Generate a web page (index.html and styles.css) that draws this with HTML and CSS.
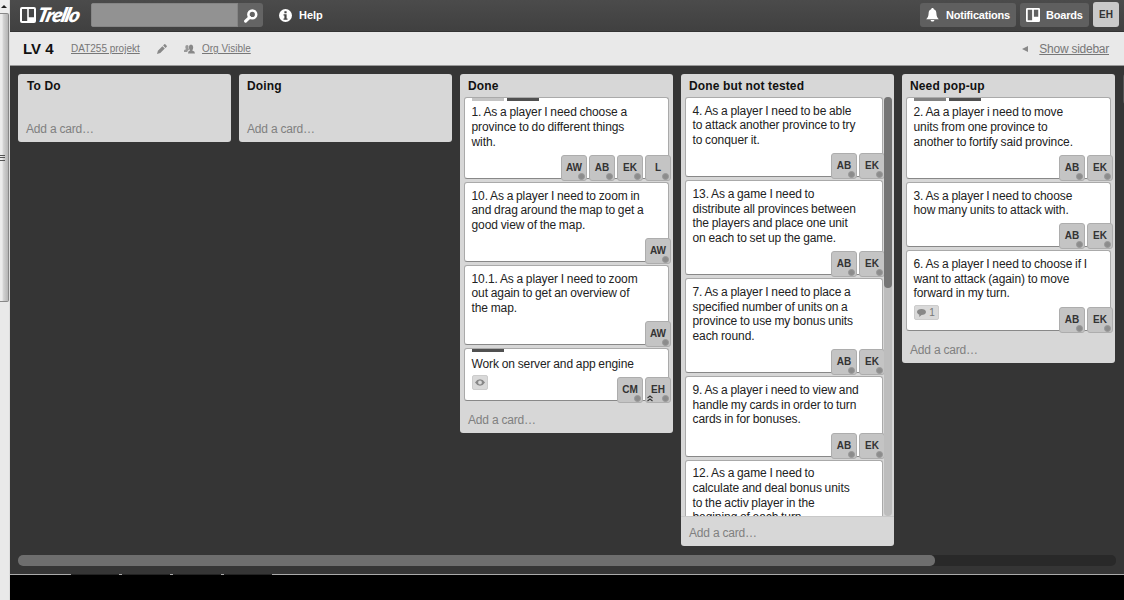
FILE: index.html
```html
<!DOCTYPE html>
<html lang="en">
<head>
<meta charset="utf-8">
<title>LV 4 | Trello</title>
<link rel="stylesheet" href="styles.css">
</head>
<body>
<div class="screen">
  <aside class="gutter">
    <div class="gutter-arrow"></div>
    <div class="gutter-thumb"><i class="grip"></i></div>
  </aside>
  <div class="window">
    <header class="topbar">
      <div class="logo">
        <svg width="16" height="16" viewBox="0 0 16 16"><path fill="#fff" fill-rule="evenodd" d="M2 0h12a2 2 0 0 1 2 2v12a2 2 0 0 1-2 2H2a2 2 0 0 1-2-2V2a2 2 0 0 1 2-2zM2 2v12h5.2V2zM8.8 2v8.2H14V2z"/></svg>
        <span class="wordmark">Trello</span>
      </div>
      <div class="search">
        <div class="search-field"></div>
        <div class="search-button"><svg width="14" height="14" viewBox="0 0 14 14"><circle cx="8.3" cy="5.4" r="3.9" fill="none" stroke="#fff" stroke-width="2.6"/><path d="M5.600 8.400L1.600 12.200" stroke="#fff" stroke-width="3" stroke-linecap="round"/></svg></div>
      </div>
      <div class="help">
        <svg width="13" height="13" viewBox="0 0 13 13"><circle cx="6.5" cy="6.5" r="6.5" fill="#fff"/><path fill="#444" d="M5.4 2.2h2.2v2H5.4zM4.6 5.2h3v4.2h.9v1.3h-4V9.400h.9V6.500h-.9z"/></svg>
        <span>Help</span>
      </div>
      <nav class="actions">
        <div class="button notifications"><svg width="13" height="14" viewBox="0 0 13 14"><path fill="#fff" d="M6.500 0C7.300 0 7.800.6 7.800 1.300C9.800 2 10.300 3.500 10.400 5.500C10.500 8 11.200 9.500 12.800 11.200H.2C1.800 9.500 2.500 8 2.600 5.500C2.700 3.500 3.200 2 5.200 1.300C5.200.6 5.700 0 6.500 0zM4.600 12h3.800C8.200 13 7.500 13.500 6.500 13.500S4.800 13 4.600 12z"/></svg><span>Notifications</span></div>
        <div class="button boards"><svg width="14" height="14" viewBox="0 0 16 16"><path fill="#fff" fill-rule="evenodd" d="M1.500 0h13A1.500 1.500 0 0 1 16 1.500v13a1.500 1.500 0 0 1-1.500 1.500h-13A1.500 1.500 0 0 1 0 14.500v-13A1.500 1.500 0 0 1 1.500 0zM2 2v12h5V2zM9 2v8h5V2z"/></svg><span>Boards</span></div>
        <div class="avatar">EH</div>
      </nav>
    </header>
    <div class="board-header">
      <h1>LV 4</h1>
      <a class="org">DAT255 projekt</a>
      <svg class="pencil" width="10" height="10" viewBox="0 0 10 10"><path fill="#888" d="M0 10l.9-3.300L5.400 2.200l2.400 2.400L3.300 9.100zM6.100 1.500L7.300.3q.5-.5 1 0l1.400 1.400q.5.5 0 1L8.500 3.900z"/></svg>
      <svg class="people" width="11" height="10" viewBox="0 0 11 10"><path fill="#999" d="M0 8V6.500Q.2 5.700 2 5.300Q1.300 4.400 1.300 3Q1.300 1 3 1Q4 1 4.500 2Q4.200 5 5 5.700Q3.300 6.400 3.200 8z"/><path fill="#888" d="M4 9.500Q3.900 7.300 6 6.600Q4.900 5.500 4.900 3Q5 .5 7 .5T9.200 3Q9.200 5.500 8.200 6.600Q11 7.200 11 9.500z"/></svg>
      <a class="visible">Org Visible</a>
      <div class="sidebar-toggle"><i class="triangle"></i><a>Show sidebar</a></div>
    </div>
    <main class="board">
      <div class="lists">
        <section class="list empty"><h2 class="inset">To Do</h2><div class="cards"></div><div class="add">Add a card…</div></section>
        <section class="list empty"><h2>Doing</h2><div class="cards"></div><div class="add">Add a card…</div></section>
        <section class="list">
          <h2>Done</h2>
          <div class="cards">
            <article class="card labeled">
              <div class="labels"><i class="light"></i><i class="dark"></i></div>
              <p>1. As a player I need choose a<br>province to do different things<br>with.</p>
              <div class="members"><b>AW</b><b>AB</b><b>EK</b><b>L</b></div>
            </article>
            <article class="card"><p>10. As a player I need to zoom in<br>and drag around the map to get a<br>good view of the map.</p><div class="members"><b>AW</b></div></article>
            <article class="card"><p>10.1. As a player I need to zoom<br>out again to get an overview of<br>the map.</p><div class="members"><b>AW</b></div></article>
            <article class="card labeled badged">
              <div class="labels"><i class="dark"></i></div>
              <p>Work on server and app engine</p>
              <div class="badge"><svg width="10" height="7" viewBox="0 0 10 7"><path fill="#888" fill-rule="evenodd" d="M0 3.500Q2 .3 5 .3T10 3.500Q8 6.700 5 6.700T0 3.500zM5 1.600A1.900 1.900 0 1 0 5 5.400A1.900 1.900 0 1 0 5 1.600z"/></svg></div>
              <div class="members"><b>CM</b><b>EH<svg class="admin" width="6" height="7" viewBox="0 0 6 7"><path d="M.5 3L3 1L5.500 3M.5 6L3 4L5.500 6" fill="none" stroke="#333" stroke-width="1.100"/></svg></b></div>
            </article>
          </div>
          <div class="add">Add a card…</div>
        </section>
        <section class="list scrolling">
          <h2>Done but not tested</h2>
          <div class="scroll-area">
            <div class="cards">
              <article class="card"><p>4. As a player I need to be able<br>to attack another province to try<br>to conquer it.</p><div class="members"><b>AB</b><b>EK</b></div></article>
              <article class="card"><p>13. As a game I need to<br>distribute all provinces between<br>the players and place one unit<br>on each to set up the game.</p><div class="members"><b>AB</b><b>EK</b></div></article>
              <article class="card"><p>7. As a player I need to place a<br>specified number of units on a<br>province to use my bonus units<br>each round.</p><div class="members"><b>AB</b><b>EK</b></div></article>
              <article class="card"><p>9. As a player i need to view and<br>handle my cards in order to turn<br>cards in for bonuses.</p><div class="members"><b>AB</b><b>EK</b></div></article>
              <article class="card"><p>12. As a game I need to<br>calculate and deal bonus units<br>to the activ player in the<br>begining of each turn.</p></article>
            </div>
            <div class="track"><div class="thumb"></div></div>
          </div>
          <div class="add">Add a card…</div>
        </section>
        <section class="list">
          <h2>Need pop-up</h2>
          <div class="cards">
            <article class="card labeled">
              <div class="labels"><i class="mid"></i><i class="dark"></i></div>
              <p>2. Aa a player i need to move<br>units from one province to<br>another to fortify said province.</p>
              <div class="members"><b>AB</b><b>EK</b></div>
            </article>
            <article class="card"><p>3. As a player I need to choose<br>how many units to attack with.</p><div class="members"><b>AB</b><b>EK</b></div></article>
            <article class="card"><p>6. As a player I need to choose if I<br>want to attack (again) to move<br>forward in my turn.</p>
              <div class="badge comments"><svg width="9" height="8" viewBox="0 0 9 8"><path fill="#888" d="M4.500 0C7 0 9 1.200 9 3S7 6 4.500 6L2.300 8V5.600C1 5.200 0 4.200 0 3C0 1.200 2 0 4.500 0z"/></svg><span>1</span></div>
              <div class="members"><b>AB</b><b>EK</b></div></article>
          </div>
          <div class="add">Add a card…</div>
        </section>
        <section class="list next"></section>
      </div>
      <div class="board-track"><div class="board-thumb"></div></div>
    </main>
    <footer class="taskbar"><div class="tabs"><i></i><i></i><i></i><i></i></div></footer>
  </div>
</div>
</body>
</html>
```
FILE: styles.css
```css
* { box-sizing: border-box; }
body { margin: 0; font-family: "Liberation Sans", Arial, sans-serif; color: #222; background: #000; }
h1, h2, p { margin: 0; }
svg { display: block; flex: none; }

.screen { display: flex; width: 1124px; height: 600px; overflow: hidden; }
.gutter { width: 10px; flex: none; background: #e9e9e9; border-right: 1px solid #ddd; }
.gutter-arrow { height: 13px; padding: 5px 0 0 1px; background: #eee; }
.gutter-arrow::before { content: ""; display: block; width: 0; border: 3px solid transparent; border-top: 0; border-bottom-color: #222; }
.gutter-thumb { width: 9px; height: 289px; display: flex; align-items: center; border: 1px solid #888; border-left: 0; border-radius: 0 2px 2px 0; background: linear-gradient(90deg, #ececec 0 25%, #d0d0d0 45%, #b5b5b5); }
.grip { width: 5px; height: 6px; border-top: 1px solid #555; border-bottom: 1px solid #555; background: linear-gradient(transparent 1px, #555 1px 2px, transparent 2px); }

.window { flex: 1; min-width: 0; display: flex; flex-direction: column; }
.topbar { height: 32px; flex: none; display: flex; align-items: flex-start; background: linear-gradient(#4b4b4b, #404040); border-bottom: 1px solid #333; color: #fff; }
.logo { width: 81px; display: flex; padding: 7px 0 0 10px; }
.wordmark { margin: -4px 0 0 2px; font: italic 800 20px/22px Lato, sans-serif; letter-spacing: -1.2px; transform: skewX(-14deg) scaleX(1.03); transform-origin: left; }
.search { display: flex; width: 172px; height: 24px; margin-top: 3px; border-radius: 3px; overflow: hidden; }
.search-field { flex: 1; background: #929292; border: 1px solid #858585; }
.search-button { width: 25px; padding: 6px 0 0 6px; background: #646464; }
.help { display: flex; gap: 7px; padding: 9px 0 0 16px; font-weight: bold; font-size: 11px; line-height: 13px; }
.actions { display: flex; gap: 4px; margin-left: auto; padding: 3px 5px 0 0; }
.button { height: 24px; display: flex; align-items: center; border-radius: 3px; background: #5f5f5f; font-weight: bold; font-size: 11px; letter-spacing: -.2px; }
.notifications { width: 96px; padding-left: 6px; gap: 7px; }
.boards { width: 69px; padding-left: 6px; gap: 6px; }
.avatar { width: 26px; height: 25px; margin-top: -1px; border-radius: 3px; background: #c9c9c9; color: #333; font: bold 10px/26px "Liberation Sans", Arial, sans-serif; text-align: center; }

.board-header { height: 34px; flex: none; display: flex; align-items: center; padding: 0 15px 0 13px; background: #e9e9e9; border-bottom: 1px solid #999; color: #777; font-size: 10px; }
.board-header h1 { width: 48px; color: #111; font-size: 15px; white-space: nowrap; }
.board-header a { text-decoration: underline; white-space: nowrap; }
.org { width: 86px; }
.people { margin: 0 7px 0 17px; }
.sidebar-toggle { margin-left: auto; display: flex; align-items: center; gap: 11px; font-size: 12px; letter-spacing: -.25px; }
.triangle { border: 3.500px solid transparent; border-left: 0; border-right: 6px solid #888; }

.board { height: 508px; flex: none; background: #353535; padding: 8px 8px 0; overflow: hidden; }
.lists { height: 481px; display: flex; align-items: flex-start; gap: 8px; overflow: hidden; margin-right: -8px; }
.list { width: 213px; flex: none; background: #d7d7d7; border-radius: 3px; }
.list h2 { height: 23px; padding-left: 8px; font-size: 12px; line-height: 24px; letter-spacing: .13px; color: #111; }
.list h2.inset { padding-left: 9px; }
.list.next { width: 10px; height: 30px; background: #555; }
.add { height: 29px; padding: 9px 0 0 8px; font-size: 12px; line-height: 14px; letter-spacing: -.2px; color: #808080; }
.empty .cards { height: 18px; }
.empty .add { height: 27px; padding-top: 7px; }
.cards { padding: 0 4px; }
.card { position: relative; min-height: 51px; margin-bottom: 3px; padding: 5.800px 7px 28.500px 6.500px; background: #fff; border: 1px solid #aaa; border-bottom-color: #888; border-radius: 3px; }
.card p { font-size: 12px; line-height: 14.670px; letter-spacing: -.08px; word-spacing: -.5px; white-space: nowrap; }
.card.labeled { padding-top: 0; }
.labels { display: flex; gap: 3px; height: 7.200px; }
.labels i { width: 32px; height: 3px; background: #505050; }
.labels .light { background: #c4c4c4; }
.labels .mid { background: #828282; }
.card.badged { padding-bottom: 9.500px; }
.badge { display: flex; align-items: center; justify-content: center; width: 16px; height: 15px; margin-top: 4px; background: #d9d9d9; border: 1px solid #ccc; border-radius: 2px; }
.comments { width: 25px; gap: 3px; margin-bottom: -19px; font-size: 10px; color: #777; }
.members { position: absolute; right: -3px; bottom: -3px; display: flex; gap: 2px; }
.members b { position: relative; width: 26px; height: 26px; border: 1px solid #adadad; border-radius: 3px; background: #c4c4c4; color: #333; font-size: 10px; line-height: 24px; text-align: center; }
.members b::after { content: ""; position: absolute; right: 1px; bottom: 0; width: 5px; height: 5px; border: 1px solid #999; border-radius: 50%; background: #8c8c8c; }
.admin { position: absolute; left: 1px; bottom: 0; }

.scroll-area { display: flex; height: 420px; overflow: hidden; border-bottom: 1px solid #c8c8c8; }
.scroll-area .cards { width: 203px; padding-right: 1px; overflow: hidden; }
.track { width: 8px; height: 419px; border-radius: 4px; background: #bdbdbd; }
.thumb { height: 191px; border-radius: 4px; background: #757575; }
.board-track { height: 11px; border-radius: 5px; background: #292929; }
.board-thumb { width: 917px; height: 11px; border-radius: 5px; background: #6e6e6e; }

.taskbar { flex: 1; background: #000; border-top: 1px solid #aaa; }
.tabs { display: flex; gap: 3px; margin: -1px 0 0 61px; }
.tabs i { width: 48px; height: 1px; background: #222; }
```
